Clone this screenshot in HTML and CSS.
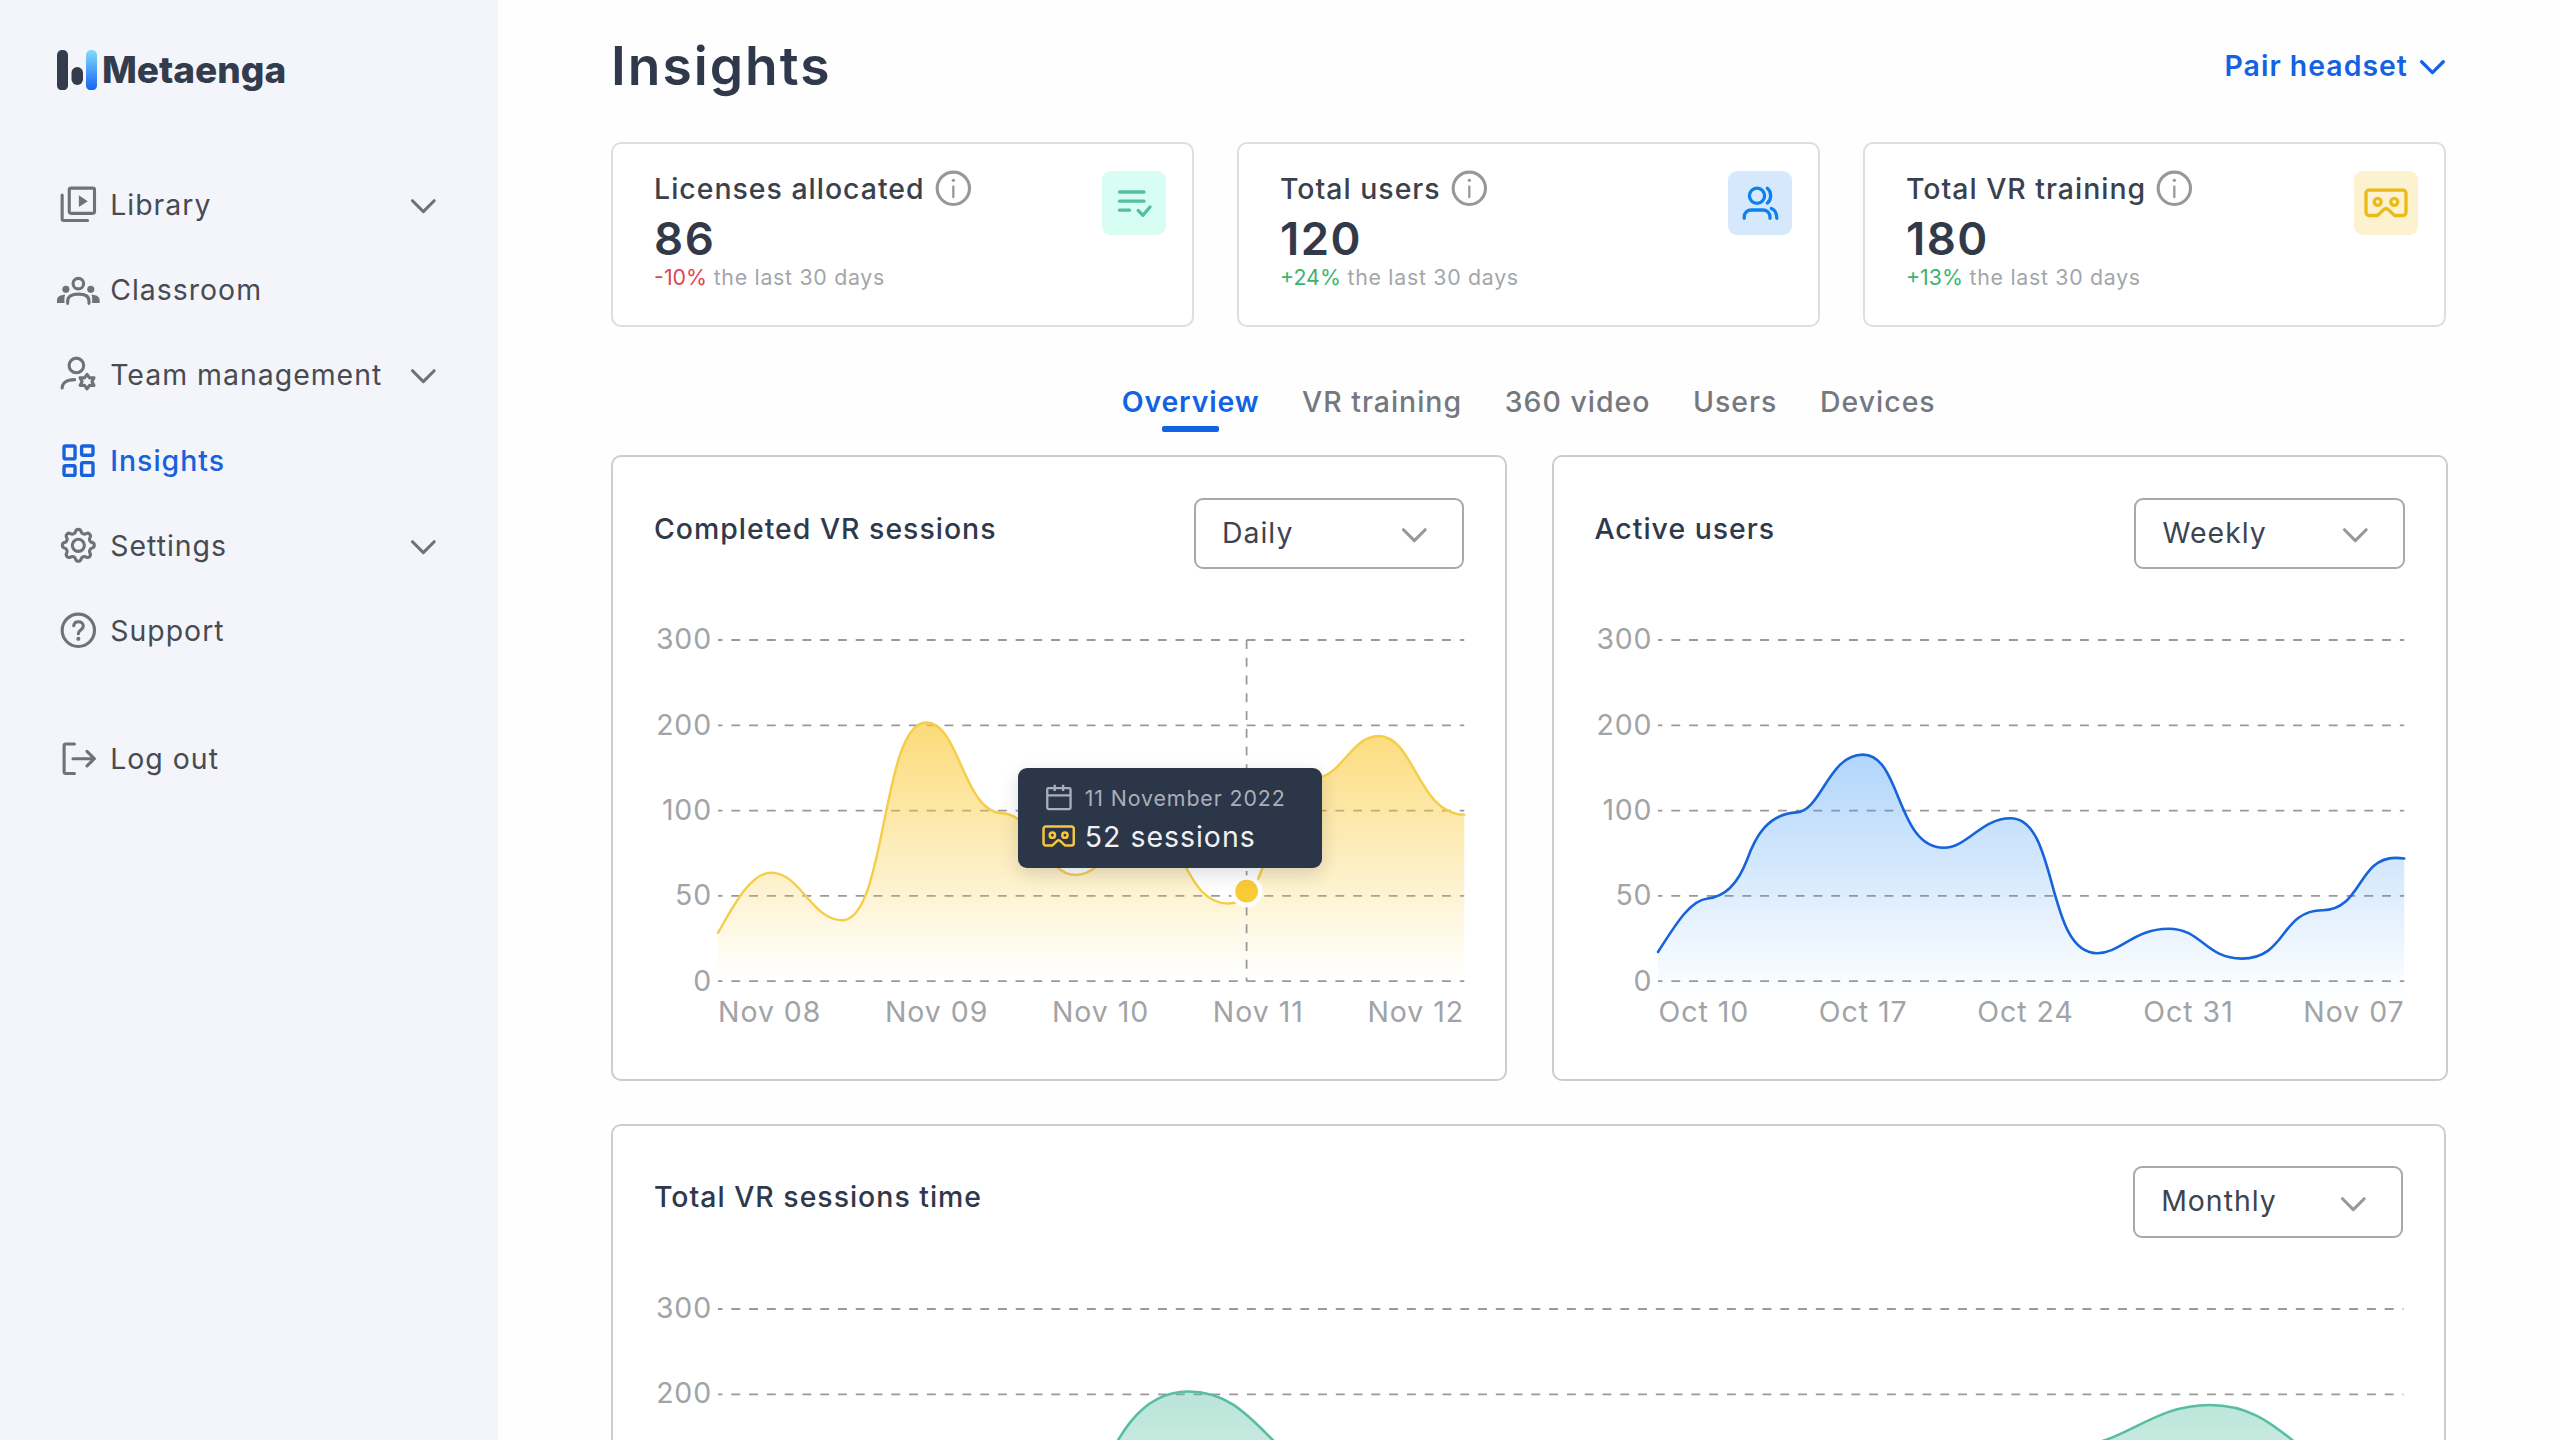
FILE: index.html
```html
<!DOCTYPE html>
<html lang="en">
<head>
<meta charset="utf-8">
<title>Metaenga – Insights</title>
<link rel="stylesheet" href="styles.css">
</head>
<body>
<svg class="defs" aria-hidden="true">
  <defs>
    <symbol id="chevron" viewBox="0 0 24 24"><path d="M5.9 10l6.1 6.1 6.1-6.1"/></symbol>
    <symbol id="info" viewBox="0 0 24 24"><circle cx="12" cy="12" r="9.1"/><path stroke-width="1.3" d="M12 11v6"/><circle cx="12" cy="7.5" r=".95" fill="currentColor" stroke="none"/></symbol>
    <symbol id="headset" viewBox="0 0 44 32"><path d="M5 3.2h34a3 3 0 0 1 3 3v19.3a3 3 0 0 1-3 3h-8.400l-6.300-5.900a3.300 3.300 0 0 0-4.600 0l-6.300 5.900H5a3 3 0 0 1-3-3V6.200a3 3 0 0 1 3-3z"/><circle cx="13.700" cy="14.800" r="3.500"/><circle cx="30.300" cy="14.800" r="3.500"/></symbol>
    <linearGradient id="logo-blue" x1="0" y1="0" x2="0" y2="1"><stop offset="0" stop-color="#83dff8"/><stop offset=".5" stop-color="#4e9ff9"/><stop offset="1" stop-color="#1463f3"/></linearGradient>
    <linearGradient id="fill-yellow" gradientUnits="userSpaceOnUse" x1="0" y1="46" x2="0" y2="190"><stop offset="0" stop-color="#f9c832" stop-opacity=".66"/><stop offset="1" stop-color="#f9c832" stop-opacity="0"/></linearGradient>
    <linearGradient id="fill-blue" gradientUnits="userSpaceOnUse" x1="0" y1="64" x2="0" y2="202"><stop offset="0" stop-color="#3c96f5" stop-opacity=".4"/><stop offset="1" stop-color="#3c96f5" stop-opacity="0"/></linearGradient>
    <linearGradient id="fill-green" gradientUnits="userSpaceOnUse" x1="0" y1="46" x2="0" y2="190"><stop offset="0" stop-color="#57bf9f" stop-opacity=".42"/><stop offset="1" stop-color="#57bf9f" stop-opacity="0"/></linearGradient>
    <path id="wave" d="M0 164.800C8 151 18 130.900 30 130.900C46 130.900 53 157.700 69.800 157.700C95 157.700 92 46.400 117.200 46.400C136 46.400 138 97 160 97.500C178 98 184 132.200 201 132.200C220 132.200 222 104 240 104C262 104 262 148.300 287 148.300C303 148.300 306 128 312 112C322 84 332 80 340 76.900C352 73 358 54 371.800 54C392 54 394 98.300 420 98.300"/>
    <path id="wave-area" d="M0 164.800C8 151 18 130.900 30 130.900C46 130.900 53 157.700 69.800 157.700C95 157.700 92 46.400 117.200 46.400C136 46.400 138 97 160 97.500C178 98 184 132.200 201 132.200C220 132.200 222 104 240 104C262 104 262 148.300 287 148.300C303 148.300 306 128 312 112C322 84 332 80 340 76.900C352 73 358 54 371.800 54C392 54 394 98.300 420 98.300V192H0Z"/>
  </defs>
</svg>

<div class="app">
  <aside class="sidebar">
    <div class="logo">
      <svg class="logo-mark" viewBox="0 0 40 40.400"><rect width="11" height="40.400" rx="5" fill="#333c4d"/><rect x="14.500" y="17" width="11.500" height="18" rx="5.700" fill="#333c4d"/><rect x="29" width="11" height="40.400" rx="5" fill="url(#logo-blue)"/></svg>
      <span class="logo-name">Metaenga</span>
    </div>
    <nav class="nav">
      <a class="nav-item">
        <svg class="icon" viewBox="0 0 24 24"><rect x="6.900" y="2.900" width="14.200" height="14.200" rx="1"/><path d="M2.900 6.800v13.300a1 1 0 0 0 1 1h13.300"/><path class="solid" d="M12.300 6.900v6.600l5-3.300z"/></svg>
        <span>Library</span>
        <svg class="icon chevron"><use href="#chevron"/></svg>
      </a>
      <a class="nav-item">
        <svg class="icon" viewBox="0 0 24 24"><circle cx="12" cy="8.800" r="2.950"/><path d="M6 19.900v-1.400c0-2.500 2.300-3.800 6-3.800s6 1.300 6 3.800v1.400"/><path class="solid" d="M4.300 19.700H0v-1.600c0-1.900 1.700-3.100 4.700-3.100-.5.900-.6 2-.4 4.700zM19.700 19.700H24v-1.600c0-1.900-1.700-3.100-4.700-3.100.5.900.6 2 .4 4.700z"/><circle class="solid" cx="5" cy="12" r="2"/><circle class="solid" cx="19" cy="12" r="2"/></svg>
        <span>Classroom</span>
      </a>
      <a class="nav-item">
        <svg class="icon" viewBox="0 0 24 24"><circle cx="10.900" cy="7" r="4.100"/><path d="M2.900 19.700c0-2.800 2.400-4.700 7-4.700"/><path d="M16.900 12l1.400 2 2.500-.1-1.100 2.200 1.100 2.200-2.500-.1-1.400 2-1.400-2-2.500.1 1.100-2.200-1.100-2.200 2.500.1z"/></svg>
        <span>Team management</span>
        <svg class="icon chevron"><use href="#chevron"/></svg>
      </a>
      <a class="nav-item active">
        <svg class="icon" viewBox="0 0 24 24"><rect x="3.950" y="3.950" width="6.200" height="7.200" rx=".8"/><rect x="13.850" y="3.950" width="6.400" height="5.200" rx=".8"/><rect x="3.950" y="15.050" width="6.200" height="5.400" rx=".8"/><rect x="13.850" y="13.300" width="6.400" height="7.150" rx=".8"/></svg>
        <span>Insights</span>
      </a>
      <a class="nav-item">
        <svg class="icon" viewBox="0 0 24 24"><path d="M10.470 4.150A1.600 1.600 0 0 1 13.530 4.150A1.900 1.900 0 0 0 16.470 5.370A1.600 1.600 0 0 1 18.630 7.530A1.900 1.900 0 0 0 19.850 10.470A1.600 1.600 0 0 1 19.850 13.530A1.900 1.900 0 0 0 18.630 16.470A1.600 1.600 0 0 1 16.470 18.630A1.900 1.900 0 0 0 13.530 19.850A1.600 1.600 0 0 1 10.470 19.850A1.900 1.900 0 0 0 7.530 18.630A1.600 1.600 0 0 1 5.370 16.470A1.900 1.900 0 0 0 4.150 13.530A1.600 1.600 0 0 1 4.150 10.470A1.900 1.900 0 0 0 5.370 7.530A1.600 1.600 0 0 1 7.530 5.370A1.900 1.900 0 0 0 10.470 4.150Z"/><circle cx="12" cy="12" r="3.400"/></svg>
        <span>Settings</span>
        <svg class="icon chevron"><use href="#chevron"/></svg>
      </a>
      <a class="nav-item">
        <svg class="icon" viewBox="0 0 24 24"><circle cx="12" cy="12" r="9.100"/><path d="M9.400 9.400c.2-1.400 1.200-2.200 2.600-2.200 1.600 0 2.800.9 2.800 2.400 0 2.300-2.800 2.200-2.800 4.300"/><circle class="solid" cx="12" cy="16.800" r="1.150"/></svg>
        <span>Support</span>
      </a>
      <a class="nav-item logout">
        <svg class="icon" viewBox="0 0 24 24"><path d="M9.800 3.900H5a1 1 0 0 0-1 1v14.600a1 1 0 0 0 1 1h4.800M9 12.200h12M16.900 8.100l4.100 4.100-4.100 4.100"/></svg>
        <span>Log out</span>
      </a>
    </nav>
  </aside>

  <main class="main">
    <header class="topbar">
      <h1>Insights</h1>
      <a class="pair">Pair headset <svg class="icon" viewBox="5 0 14 24"><path d="M5.900 10l6.100 6.100 6.100-6.100"/></svg></a>
    </header>

    <section class="stats">
      <article class="stat">
        <div>
          <div class="stat-label">Licenses allocated <svg class="icon info"><use href="#info"/></svg></div>
          <div class="stat-value">86</div>
          <div class="stat-note"><span class="down">-10%</span> the last 30 days</div>
        </div>
        <svg class="badge mint" viewBox="0 0 64 64"><path d="M17.500 21h24.500M17.500 30.200h24.500M17.500 39.200h10M36.200 39.500l4.800 4.800 7-8.300"/></svg>
      </article>
      <article class="stat">
        <div>
          <div class="stat-label">Total users <svg class="icon info"><use href="#info"/></svg></div>
          <div class="stat-value">120</div>
          <div class="stat-note"><span class="up">+24%</span> the last 30 days</div>
        </div>
        <svg class="badge sky" viewBox="0 0 64 64"><circle cx="29" cy="24.700" r="7.600"/><path d="M16.200 47.300v-1c0-4.500 3-7.300 7.300-7.300h11.200c4.300 0 7.300 2.800 7.300 7.300v1M39.300 17.300c4.500 3.400 4.500 11.400 0 14.800M43.300 37.500c3.800 1.400 5.400 4.600 5.500 9.800"/></svg>
      </article>
      <article class="stat">
        <div>
          <div class="stat-label">Total VR training <svg class="icon info"><use href="#info"/></svg></div>
          <div class="stat-value">180</div>
          <div class="stat-note"><span class="up">+13%</span> the last 30 days</div>
        </div>
        <svg class="badge sun" viewBox="0 0 64 64"><use href="#headset" x="10" y="16" width="44" height="32"/></svg>
      </article>
    </section>

    <nav class="tabs">
      <a class="tab current">Overview</a>
      <a class="tab">VR training</a>
      <a class="tab">360 video</a>
      <a class="tab">Users</a>
      <a class="tab">Devices</a>
    </nav>

    <section class="charts">
      <article class="card">
        <header class="card-head">
          <h2>Completed VR sessions</h2>
          <div class="select"><span>Daily</span><svg class="icon"><use href="#chevron"/></svg></div>
        </header>
        <div class="chart">
          <div class="y-axis"><span>300</span><span>200</span><span>100</span><span>50</span><span>0</span></div>
          <div class="plot">
            <svg class="graph" viewBox="0 0 420 192">
              <path class="grid" d="M0 0H420M0 48H420M0 96H420M0 144H420M0 192H420"/>
              <use href="#wave-area" fill="url(#fill-yellow)"/>
              <path class="cursor" d="M297.500 0V192"/>
              <use class="line yellow" href="#wave"/>
              <circle cx="297.500" cy="141.400" r="9" fill="#fff"/>
              <circle cx="297.500" cy="141.400" r="6.400" fill="#fbca37"/>
            </svg>
            <div class="x-axis"><span>Nov 08</span><span>Nov 09</span><span>Nov 10</span><span>Nov 11</span><span>Nov 12</span></div>
            <div class="tooltip">
              <div class="tip-date"><svg viewBox="0 0 33 33"><path d="M6.500 6h20.500a1.300 1.300 0 0 1 1.300 1.300v18.200a1.300 1.300 0 0 1-1.300 1.300H6.500a1.300 1.300 0 0 1-1.300-1.300V7.300A1.300 1.300 0 0 1 6.500 6zM5.200 13.200h23.100M12.600 2.800v6M20.900 2.800v6"/></svg><span>11 November 2022</span></div>
              <div class="tip-value"><svg viewBox="0 0 44 32"><use href="#headset"/></svg><span>52 sessions</span></div>
            </div>
          </div>
        </div>
      </article>

      <article class="card">
        <header class="card-head">
          <h2>Active users</h2>
          <div class="select"><span>Weekly</span><svg class="icon"><use href="#chevron"/></svg></div>
        </header>
        <div class="chart">
          <div class="y-axis"><span>300</span><span>200</span><span>100</span><span>50</span><span>0</span></div>
          <div class="plot">
            <svg class="graph" viewBox="0 0 420 192">
              <path class="grid" d="M0 0H420M0 48H420M0 96H420M0 144H420M0 192H420"/>
              <path fill="url(#fill-blue)" d="M0 175.600C10 160 18 146.500 28 145.500C38 144.500 45 137 50 124C55 110 62 98 78 97C92 96 96 64.500 115.300 64.500C137 64.500 134 116.900 160.900 116.900C174 116.900 182 100.300 198.400 100.300C225.500 100.300 218 176.300 247.200 176.300C260 176.300 268 162.500 287.400 162.500C306 162.500 308 179.300 328.600 179.300C354 179.300 350 152.300 374 152.100C396 152 394 122.600 415 122.600C417 122.600 419 122.800 420 123V202H0Z"/>
              <path class="line blue" d="M0 175.600C10 160 18 146.500 28 145.500C38 144.500 45 137 50 124C55 110 62 98 78 97C92 96 96 64.500 115.300 64.500C137 64.500 134 116.900 160.900 116.900C174 116.900 182 100.300 198.400 100.300C225.500 100.300 218 176.300 247.200 176.300C260 176.300 268 162.500 287.400 162.500C306 162.500 308 179.300 328.600 179.300C354 179.300 350 152.300 374 152.100C396 152 394 122.600 415 122.600C417 122.600 419 122.800 420 123"/>
            </svg>
            <div class="x-axis"><span>Oct 10</span><span>Oct 17</span><span>Oct 24</span><span>Oct 31</span><span>Nov 07</span></div>
          </div>
        </div>
      </article>
    </section>

    <article class="card wide">
      <header class="card-head">
        <h2>Total VR sessions time</h2>
        <div class="select"><span>Monthly</span><svg class="icon"><use href="#chevron"/></svg></div>
      </header>
      <div class="chart">
        <div class="y-axis"><span>300</span><span>200</span></div>
        <div class="plot">
          <svg class="graph" viewBox="0 0 948 192">
            <path class="grid" d="M0 0H948M0 48H948M0 96H948M0 144H948M0 192H948"/>
            <g transform="scale(2.257 1)">
              <use href="#wave-area" fill="url(#fill-green)"/>
              <use class="line green" href="#wave"/>
            </g>
          </svg>
        </div>
      </div>
    </article>
  </main>
</div>
</body>
</html>
```
FILE: styles.css
```css
/* 1rem = 10 layout units */
html { font-size: 17.7778px; }
* { box-sizing: border-box; }

body {
  margin: 0;
  background: #fefefe;
  font-family: Inter, "Liberation Sans", sans-serif;
  font-size: 1.6rem;
  letter-spacing: .035em;
  color: #2f394b;
}

h1, h2 { margin: 0; }
.defs { position: absolute; width: 0; height: 0; }

.icon {
  width: 2.4rem;
  height: 2.4rem;
  flex: none;
  fill: none;
  stroke: currentColor;
  stroke-width: 1.75;
  stroke-linecap: round;
  stroke-linejoin: round;
  overflow: visible;
}
.solid { fill: currentColor; stroke: none; }

.app {
  display: flex;
  height: 1440px;
  overflow: hidden;
}

/* Sidebar */
.sidebar {
  width: 497.5px;
  flex: none;
  padding: 50px 3rem 0 3.2rem;
  background: #f3f5fa;
}
.logo { display: flex; align-items: center; gap: 5px; }
.logo-mark { width: 40px; height: 40.4px; }
.logo-name {
  font-size: 37px;
  font-weight: 800;
  letter-spacing: 0;
  line-height: 40px;
  color: #333c4d;
}
.nav { margin-top: 71px; }
.nav-item {
  display: flex;
  align-items: center;
  gap: 10.7px;
  height: 4.8rem;
  color: #474b52;
}
.nav-item .icon { color: #6e7379; }
.nav-item .chevron { margin-left: auto; }
.nav-item.active { color: #1762dc; font-weight: 500; }
.nav-item.active .icon { color: inherit; stroke-width: 1.9; }
.nav-item.logout { margin-top: 2.4rem; }

/* Main column */
.main {
  flex: 1;
  min-width: 0;
  padding: 0 6.4rem 0 113.6px;
}
.topbar {
  display: flex;
  align-items: center;
  justify-content: space-between;
  height: 8rem;
  padding-bottom: 11.5px;
}
h1 {
  font-size: 3rem;
  font-weight: 600;
  letter-spacing: .0375em;
}
.pair {
  display: flex;
  align-items: center;
  gap: 12px;
  margin-right: 1.5px;
  font-weight: 600;
  color: #1362e3;
}
.pair .icon { width: 1.4rem; stroke-width: 1.85; }

.stats { display: flex; gap: 2.4rem; }
.stat {
  flex: 1;
  display: flex;
  justify-content: space-between;
  height: 10.4rem;
  padding: 23px 26.5px 0 41px;
  border: 2px solid #dedee0;
  border-radius: 10px;
  background: #fff;
}
.stat-label {
  display: flex;
  align-items: center;
  gap: 7px;
  height: 2.4rem;
  font-weight: 500;
  color: #3a414d;
}
.info { color: #98989a; }
.stat-value {
  font-size: 45.5px;
  font-weight: 600;
  letter-spacing: 1.5px;
  line-height: 57px;
  color: #323a4a;
}
.stat-note {
  font-size: 1.2rem;
  letter-spacing: .033em;
  line-height: 21px;
  color: #a3a6aa;
}
.up, .down { letter-spacing: 0; }
.up { color: #3cb371; }
.down { color: #dc4650; }
.badge {
  width: 3.6rem;
  height: 3.6rem;
  margin-top: 4px;
  border-radius: 9px;
  fill: none;
  stroke: currentColor;
  stroke-width: 3.3;
  stroke-linecap: round;
  stroke-linejoin: round;
}
.mint { background: #d8fdf3; color: #52bfa1; }
.sky { background: #d6e8fb; color: #0d80f2; }
.sun { background: #fdf2cf; color: #ecba18; }

.tabs {
  display: flex;
  justify-content: center;
  gap: 2.4rem;
  height: 7.2rem;
  padding-top: 49px;
}
.tab {
  line-height: 52px;
  font-weight: 500;
  color: #75787e;
}
.tab.current {
  display: flex;
  flex-direction: column;
  align-items: center;
  font-weight: 600;
  letter-spacing: .03em;
  color: #1362e3;
}
.tab.current::after {
  content: "";
  width: 3.2rem;
  height: 5.5px;
  margin-top: -2px;
  border-radius: 2px;
  background: #1362e3;
}

/* Chart cards */
.charts { display: flex; gap: 2.5rem; }
.card {
  width: 50.4rem;
  height: 35.2rem;
  flex: none;
  padding: 2.3rem 2.3rem 0;
  border: 2px solid #cdcdcf;
  border-radius: 10px;
  background: #fff;
}
.card.wide { width: auto; margin-top: 2.4rem; }
.card-head {
  display: flex;
  justify-content: space-between;
  align-items: flex-start;
}
h2 {
  font-size: 1.6rem;
  font-weight: 500;
  line-height: 61.4px;
}
.select {
  display: flex;
  align-items: center;
  justify-content: space-between;
  width: 15.2rem;
  height: 4rem;
  padding: 0 26.5px 0 26px;
  border: 2px solid #a9a9ab;
  border-radius: 9px;
  color: #3d444f;
}
.select span { padding-bottom: 3px; }
.select .icon { color: #98989a; }

.chart { display: flex; margin-top: 4rem; }
.y-axis {
  display: flex;
  flex-direction: column;
  width: 3.6rem;
  height: 24rem;
  flex: none;
  margin: -44px 0 -48px;
  padding-right: 6px;
  line-height: 4.8rem;
  text-align: right;
  letter-spacing: .03em;
  color: #a1a3a6;
}
.plot { position: relative; flex: 1; }
.graph { display: block; width: 100%; overflow: visible; }
.grid, .cursor { fill: none; stroke: #99999b; stroke-width: 1; stroke-dasharray: 5 5; }
.grid { stroke-dashoffset: 2.5; }
.line { fill: none; stroke-linecap: round; }
#wave, .line { vector-effect: non-scaling-stroke; }
.yellow { stroke: #f4ce48; stroke-width: 2.4px; }
.blue { stroke: #1763d9; stroke-width: 2.6px; }
.green { stroke: #58bda2; stroke-width: 2.6px; }
.x-axis {
  display: flex;
  justify-content: space-between;
  margin-top: 11px;
  line-height: 40px;
  color: #a1a3a6;
}

.tooltip {
  position: absolute;
  left: 300px;
  top: 128px;
  width: 304.4px;
  height: 99.5px;
  padding: 11px 24px 0;
  border-radius: 9px;
  background: #2c3649;
  box-shadow: 0 6px 18px rgba(30, 40, 60, .16);
}
.tooltip div {
  display: flex;
  align-items: center;
  gap: 9.5px;
  height: 38px;
}
.tooltip svg {
  width: 33.3px;
  flex: none;
  fill: none;
  stroke: currentColor;
  stroke-linejoin: round;
}
.tip-date { font-size: 1.2rem; letter-spacing: .042em; color: #a9afba; }
.tip-date svg { stroke-width: 2.3; }
.tip-value svg { color: #f8c63c; stroke-width: 3.3; }
.tip-value { color: #eff1f5; }
```
